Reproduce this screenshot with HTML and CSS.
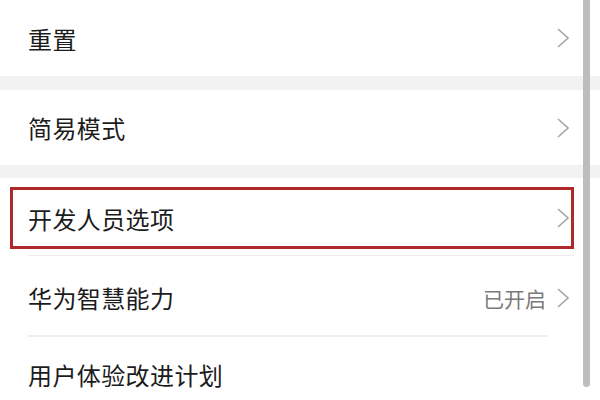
FILE: index.html
```html
<!DOCTYPE html>
<html lang="zh-CN">
  <head>
    <meta charset="UTF-8" />
    <meta name="viewport" content="width=device-width, initial-scale=1.0" />
    <title>系统</title>
    <link rel="stylesheet" href="styles.css">
  </head>
  <body>
    <div class="page">
      <div class="group">
        <div class="item first">
          <span class="label">重置</span>
          <svg class="arrow" viewBox="0 0 12 20"><polyline points="1,1 11,10 1,19" /></svg>
        </div>
      </div>

      <div class="group">
        <div class="item second">
          <span class="label">简易模式</span>
          <svg class="arrow" viewBox="0 0 12 20"><polyline points="1,1 11,10 1,19" /></svg>
        </div>
      </div>

      <div class="group">
        <div class="item dev line">
          <span class="label">开发人员选项</span>
          <svg class="arrow" viewBox="0 0 12 20"><polyline points="1,1 11,10 1,19" /></svg>
          <div class="mark"></div>
        </div>
        <div class="item ai line short">
          <span class="label">华为智慧能力</span>
          <span class="value">已开启</span>
          <svg class="arrow" viewBox="0 0 12 20"><polyline points="1,1 11,10 1,19" /></svg>
        </div>
        <div class="item plan">
          <span class="label">用户体验改进计划</span>
        </div>
      </div>
    </div>
    <div class="scrollbar"></div>
  </body>
</html>
```

FILE: styles.css
```css
* {
  margin: 0;
  padding: 0;
  box-sizing: border-box;
}
body {
  width: 600px;
  height: 400px;
  overflow: hidden;
  background: #fff;
  font-family: "Noto Sans CJK SC", "Noto Sans", sans-serif;
  position: relative;
}
.page {
  display: flex;
  flex-direction: column;
  gap: 0;
}
.group {
  background: #fff;
  border-bottom: 14px solid #f2f2f2;
}
.group:nth-child(2) {
  border-bottom-width: 13px;
}
.group:last-child {
  border-bottom: none;
}
.item {
  display: flex;
  align-items: center;
  padding: 0 31px 0 28px;
  position: relative;
}
.item.first {
  height: 76px;
}
.item.second {
  height: 75px;
}
.item.dev {
  height: 78px;
  padding-top: 2px;
}
.item.ai {
  height: 81px;
  padding-top: 2px;
}
.item.plan {
  height: 74px;
}
.item.line::after {
  content: "";
  position: absolute;
  left: 28px;
  right: 26px;
  bottom: 0;
  height: 1px;
  background: #ececec;
}
.item.short::after {
  right: 53px;
  height: 2px;
}
.label {
  flex: 1;
  font-size: 24px;
  color: #1c1c1c;
  letter-spacing: 0.4px;
}
.value {
  font-size: 21px;
  color: #7a7a7a;
  margin-right: 11px;
}
.arrow {
  width: 12px;
  height: 20px;
  fill: none;
  stroke: #a6a6a6;
  stroke-width: 1.6;
}
.mark {
  position: absolute;
  left: 10px;
  right: 26px;
  top: 9px;
  bottom: 7px;
  border: 3px solid #b0292b;
}
.scrollbar {
  position: absolute;
  top: 0;
  right: 10px;
  width: 7px;
  height: 387px;
  background: #bdbdbd;
  border-radius: 0 0 4px 4px;
}
```
